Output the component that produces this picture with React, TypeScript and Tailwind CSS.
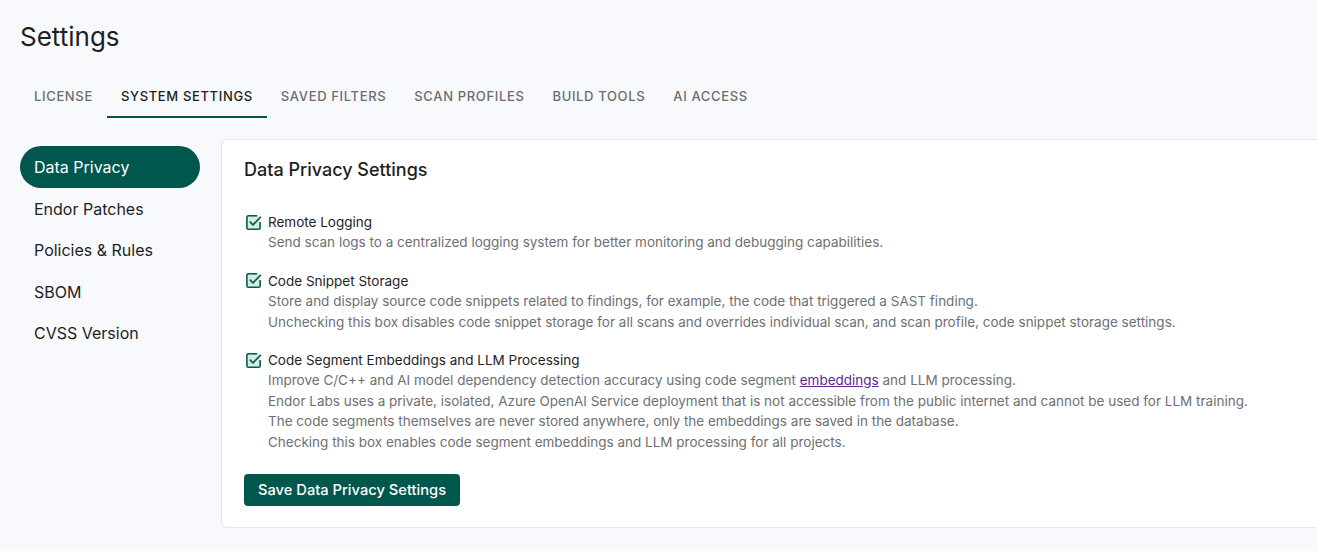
const tabs = ["License", "System Settings", "Saved Filters", "Scan Profiles", "Build Tools", "AI Access"];
const sideItems = ["Data Privacy", "Endor Patches", "Policies & Rules", "SBOM", "CVSS Version"];

function CheckIcon() {
  return (
    <svg className="ml-px mr-[6px] mt-[1.5px] h-[17px] w-[17px] shrink-0" viewBox="0 0 18 18" fill="none">
      <path
        d="M16 8.5V14.8a1.4 1.4 0 0 1-1.4 1.4H3.4A1.4 1.4 0 0 1 2 14.8V3.4A1.4 1.4 0 0 1 3.4 2H13"
        fill="#d6ece0"
        stroke="#0a5a4e"
        strokeWidth={1.7}
        strokeLinejoin="round"
      />
      <path d="M2.8 2.8h11v4l-1 1" fill="#d6ece0" />
      <path d="M5.6 8.6l2.9 2.9L16.2 3.6" stroke="#0a5a4e" strokeWidth={1.8} strokeLinecap="round" strokeLinejoin="round" />
    </svg>
  );
}

function Option({ title, lines }: { title: string; lines: React.ReactNode[] }) {
  return (
    <div className="flex">
      <CheckIcon />
      <div>
        <div className="text-[13.5px] leading-[20.4px] text-[#1f2328]">{title}</div>
        {lines.map((l, i) => (
          <div key={i} className="text-[13.5px] leading-[20.4px] text-[#6e7073]">
            {l}
          </div>
        ))}
      </div>
    </div>
  );
}

export default function App() {
  return (
    <div className="min-h-screen bg-[#f7f9fc] pl-5 pt-[21px] font-['Inter','Liberation_Sans',sans-serif]">
      <h1 className="text-[26px] leading-8 text-[#1d1f22]">Settings</h1>

      {/* Tabs */}
      <nav className="mt-[19px] flex">
        {tabs.map((t, i) => (
          <div
            key={t}
            className={`flex h-[46px] items-center border-b-2 px-[14px] pt-[6px] text-[13px] font-medium uppercase tracking-[0.65px] ${
              i === 1 ? "border-[#00574d] text-[#1d1f22]" : "border-transparent text-[#6b6d70]"
            }`}
          >
            {t}
          </div>
        ))}
      </nav>

      <div className="mt-[21px] flex items-start">
        {/* Sidebar */}
        <aside className="w-[180px] shrink-0 pt-[7px]">
          {sideItems.map((s, i) => (
            <div
              key={s}
              className={`flex h-[41.5px] items-center rounded-full px-[14px] pt-px text-[16px] ${
                i === 0 ? "bg-[#00574d] text-white" : "text-[#1d1f22]"
              }`}
            >
              {s}
            </div>
          ))}
        </aside>

        {/* Card */}
        <section className="ml-[21px] flex-1 rounded-l-md border-y border-l border-[#e4e7eb] bg-white pb-[21px] pl-[22px] pt-4">
          <h2 className="text-[18px] font-medium leading-7 text-[#1d1f22]">Data Privacy Settings</h2>

          <div className="mt-7 flex flex-col gap-[18px]">
            <Option
              title="Remote Logging"
              lines={["Send scan logs to a centralized logging system for better monitoring and debugging capabilities."]}
            />
            <Option
              title="Code Snippet Storage"
              lines={[
                "Store and display source code snippets related to findings, for example, the code that triggered a SAST finding.",
                "Unchecking this box disables code snippet storage for all scans and overrides individual scan, and scan profile, code snippet storage settings.",
              ]}
            />
            <Option
              title="Code Segment Embeddings and LLM Processing"
              lines={[
                <>
                  Improve C/C++ and AI model dependency detection accuracy using code segment{" "}
                  <a className="text-[#5b2a8f] underline" href="#">
                    embeddings
                  </a>{" "}
                  and LLM processing.
                </>,
                "Endor Labs uses a private, isolated, Azure OpenAI Service deployment that is not accessible from the public internet and cannot be used for LLM training.",
                "The code segments themselves are never stored anywhere, only the embeddings are saved in the database.",
                "Checking this box enables code segment embeddings and LLM processing for all projects.",
              ]}
            />
          </div>

          <button className="mt-[22px] h-8 rounded bg-[#00574d] px-[14px] text-[14.7px] font-medium text-white">
            Save Data Privacy Settings
          </button>
        </section>
      </div>
    </div>
  );
}
